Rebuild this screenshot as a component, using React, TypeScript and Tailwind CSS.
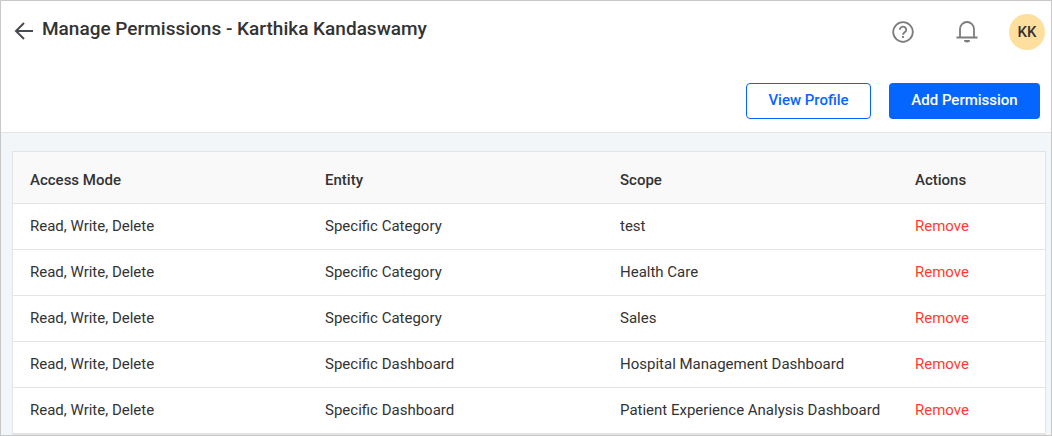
const rows = [
  ["Specific Category", "test"],
  ["Specific Category", "Health Care"],
  ["Specific Category", "Sales"],
  ["Specific Dashboard", "Hospital Management Dashboard"],
  ["Specific Dashboard", "Patient Experience Analysis Dashboard"],
];

const cell = "border-b border-[#e3e4e6] pb-[2px] pl-[17px]";

export default function App() {
  return (
    <div className="h-screen overflow-hidden border border-[#c8c8c8] bg-[#f3f6f9] font-['Roboto',sans-serif] text-[15px] leading-5 text-[#333]">
      <header className="border-b border-[#e3e4e6] bg-white">
        <div className="flex h-[62px] items-center pl-[11px] pr-[6px]">
          <button type="button" aria-label="Back" className="mb-[2px] flex h-6 w-6 items-center justify-center">
            <svg width="20" height="18" viewBox="0 0 20 18" fill="none" stroke="#484b52" strokeWidth="2">
              <path d="M19 9H2M10 1L2 9l8 8" />
            </svg>
          </button>
          <h1 className="mb-[6px] ml-[6px] text-[19px] font-medium leading-6">Manage Permissions - Karthika Kandaswamy</h1>
          <div className="ml-auto flex items-center">
            <button type="button" aria-label="Help" className="mr-[42px]">
              <svg width="22" height="22" viewBox="0 0 22 22" fill="none" stroke="#7c7c7c" strokeWidth="1.8">
                <circle cx="11" cy="11" r="9.8" />
                <path d="M7.800 8.800a3.200 3 0 1 1 5.200 2.200c-1.200 1-2 1.300-2 2.800M11 15v2" />
              </svg>
            </button>
            <button type="button" aria-label="Notifications" className="mr-[31px]">
              <svg width="22" height="22" viewBox="0 0 22 22" fill="none" stroke="#7c7c7c" strokeWidth="1.8">
                <path d="M.5 16.500h21M4 16.500V8a7 7 0 0 1 14 0v8.500" />
                <path d="M8 19h6a3 2.500 0 0 1-6 0z" fill="#7c7c7c" stroke="none" />
              </svg>
            </button>
            <button type="button" className="h-9 w-9 rounded-full bg-[#ffdf9e] text-[15px] font-medium">KK</button>
          </div>
        </div>
        <div className="flex justify-end gap-[18px] pb-[13px] pr-[11px] pt-5">
          <button type="button" className="h-9 w-[125px] rounded border border-[#0566ff] pb-[2px] font-medium text-[#0566ff]">View Profile</button>
          <button type="button" className="h-9 w-[151px] rounded bg-[#0566ff] pb-[2px] font-medium text-white">Add Permission</button>
        </div>
      </header>
      <main className="pl-[11px] pr-[5px] pt-[18px]">
        <table className="w-full table-fixed border-separate border-spacing-0 border border-[#e3e4e6] bg-white text-left">
          <colgroup>
            <col className="w-[295px]" />
            <col className="w-[295px]" />
            <col className="w-[295px]" />
            <col />
          </colgroup>
          <thead>
            <tr className="h-[52px] bg-[#f9f9f9]">
              {["Access Mode", "Entity", "Scope", "Actions"].map((h) => (
                <th key={h} className="border-b border-[#e3e4e6] pl-[17px] pt-1 font-medium">{h}</th>
              ))}
            </tr>
          </thead>
          <tbody>
            {rows.map(([entity, scope]) => (
              <tr key={scope} className="h-[46px]">
                <td className={cell}>Read, Write, Delete</td>
                <td className={cell}>{entity}</td>
                <td className={`${cell} whitespace-nowrap`}>{scope}</td>
                <td className={cell}>
                  <button type="button" className="text-[#ff3b30]">Remove</button>
                </td>
              </tr>
            ))}
          </tbody>
        </table>
      </main>
    </div>
  );
}
